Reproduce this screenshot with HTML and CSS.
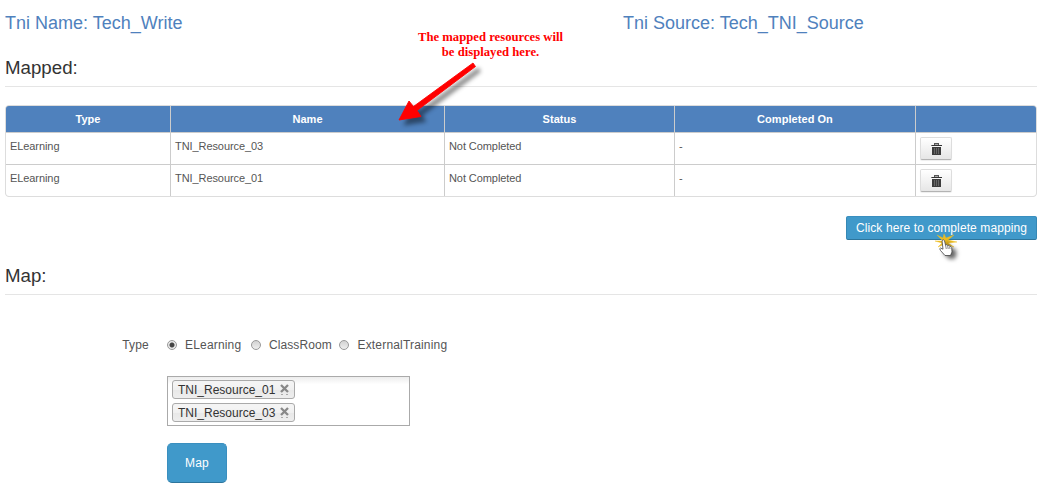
FILE: index.html
```html
<!DOCTYPE html>
<html lang="en">
<head>
<meta charset="utf-8">
<title>Tni Mapping</title>
<link rel="stylesheet" href="styles.css">
</head>
<body>
<svg class="defs" width="0" height="0" aria-hidden="true">
  <symbol id="trash" viewBox="0 0 12 14">
    <path fill="#555" d="M4 1h5v2H4z"/>
    <path fill="#aaa" d="M5 2h3v1H5z"/>
    <path fill="#333" d="M2 3h10v1H2z"/>
    <path fill="#777" d="M1 3h1v1H1z"/>
    <path fill="#3c3c3c" d="M2 5h9v8H2z"/>
    <path fill="#666" d="M4 6h1v6H4zM6 6h1v6H6zM8 6h1v6H8z"/>
  </symbol>
  <symbol id="cross" viewBox="0 0 9 11">
    <path stroke="#888" stroke-width="2.3" d="M1 1l7 7M8 1L1 8"/>
    <path fill="#aaa" d="M1 10h2v1H1zM6 10h2v1H6z"/>
  </symbol>
</svg>
<main class="page">
  <header class="titles">
    <h4 class="title title-name">Tni Name: Tech_Write</h4>
    <h4 class="title title-source">Tni Source: Tech_TNI_Source</h4>
  </header>
  <h4 class="section">Mapped:</h4>
  <div class="table">
    <div class="th">Type</div><div class="th">Name</div><div class="th">Status</div><div class="th">Completed On</div><div class="th"></div>
    <div class="td">ELearning</div><div class="td">TNI_Resource_03</div><div class="td">Not Completed</div><div class="td">-</div><div class="td td-action"><button class="delete"><svg class="trash"><use href="#trash"/></svg></button></div>
    <div class="td">ELearning</div><div class="td">TNI_Resource_01</div><div class="td">Not Completed</div><div class="td">-</div><div class="td td-action"><button class="delete"><svg class="trash"><use href="#trash"/></svg></button></div>
  </div>
  <div class="actions"><button class="complete">Click here to complete mapping</button></div>
  <h4 class="section section-map">Map:</h4>
  <form class="form">
    <span class="label">Type</span>
    <div class="radios">
      <span class="radio radio-on"></span><span class="option option-first">ELearning</span>
      <span class="radio"></span><span class="option option-second">ClassRoom</span>
      <span class="radio"></span><span class="option">ExternalTraining</span>
    </div>
    <div class="chosen">
      <span class="chip">TNI_Resource_01<svg class="cross"><use href="#cross"/></svg></span>
      <span class="chip">TNI_Resource_03<svg class="cross"><use href="#cross"/></svg></span>
    </div>
    <button type="button" class="map">Map</button>
  </form>
  <p class="note">The mapped resources will<br>be displayed here.</p>
  <svg class="arrow" viewBox="0 0 100 75">
    <path d="M78 8L80.500 11.500L22 55.500L26 61.500L4 65L14 46L18.500 51.500z"/>
  </svg>
  <svg class="pointer" viewBox="0 0 40 40">
    <path class="spark" d="M13 16L7 10L13 13L14 9L16 13L24 10L18 15L27 17L18 18L24 22L15 19L8 22L12 18L5 16L12 16z"/>
    <path class="hand" d="M12 15.500q1.500-1.500 2.500.2l1 4.300q1.500-.8 2 .5q1.500-.5 2 .8q1.800-.3 2.200 1.200l.3 4.500l-1.500 3.500h-5.500l-4.500-5q-1.500-2.500 0-2.500l2.500 1.200z"/>
    <path class="lines" d="M15.500 20l.8 4M17.700 21l.5 3M19.700 22l.3 2"/>
  </svg>
</main>
</body>
</html>
```
FILE: styles.css
```css
* { box-sizing: border-box; }
body { margin: 0; background: #fff; color: #555; font: 12px/20px "Liberation Sans", Arial, sans-serif; }
button { font-family: inherit; margin: 0; padding: 0; }
.defs { position: absolute; }
.page { position: relative; height: 495px; padding: 13px 10px 0 5px; overflow: hidden; }
.titles { display: grid; grid-template-columns: 618px 1fr; height: 45px; }
.title, .section { margin: 0; font-size: 18px; font-weight: 400; line-height: 20px; }
.title { color: #4f81bd; }
.section { height: 29px; border-bottom: 1px solid #e5e5e5; color: #333; font-size: 18.7px; }
.table { display: grid; grid-template-columns: 164px 273px 229px 240px 120px; grid-template-rows: 26px 31px 31px; gap: 1px; margin-top: 18px; border: 1px solid #ddd; border-radius: 4px; background: #ccc; overflow: hidden; }
.th { background: #4f81bd; color: #fff; font-size: 11px; font-weight: 700; line-height: 27px; text-align: center; letter-spacing: .05px; }
.td { padding: 3px 4px; background: #fff; font-size: 11px; line-height: 20px; letter-spacing: -.08px; }
.td-action { padding-top: 4px; }
.delete { display: flex; align-items: center; justify-content: center; width: 32px; height: 23px; border: 1px solid #ddd; border-bottom-color: #b3b3b3; border-radius: 2px; background: linear-gradient(#fff, #e6e6e6); box-shadow: 0 1px 1px rgba(0,0,0,.07); }
.trash { width: 12px; height: 14px; }
.actions { display: flex; justify-content: flex-end; margin-top: 19px; }
.complete { width: 191px; height: 24px; border: 1px solid; border-color: #398fc0 #3688b5 #2d759c; border-radius: 2px; background: #4099ca; color: #fff; font-size: 12px; letter-spacing: .1px; }
.section-map { margin-top: 26px; }
.form { display: grid; grid-template-columns: 144px 1fr; column-gap: 18px; margin-top: 40px; }
.label { text-align: right; letter-spacing: .2px; }
.radios { display: flex; align-items: center; height: 20px; }
.radio { width: 10px; height: 10px; border: 1px solid #999; border-radius: 50%; background: linear-gradient(#d2d2d2, #eee); }
.radio-on { background: radial-gradient(circle, #444 0 2px, #e8e8e8 3px); }
.option { margin: 0 9px 0 8px; letter-spacing: .18px; }
.option-first { margin-right: 9.7px; }
.option-second { margin-right: 7.700px; letter-spacing: .08px; }
.chosen { grid-column: 2; display: flex; flex-direction: column; align-items: flex-start; gap: 4px; width: 243px; height: 50px; margin-top: 21px; padding: 3px 4px; border: 1px solid #aaa; background: linear-gradient(#eee 1%, #fff 15%); }
.chip { display: flex; align-items: center; justify-content: space-between; width: 123px; height: 19px; padding: 0 5px; border: 1px solid #aaa; border-radius: 3px; background: linear-gradient(#f4f4f4 20%, #f0f0f0 50%, #e8e8e8 52%, #eee); color: #333; }
.cross { width: 9px; height: 11px; }
.map { grid-column: 2; width: 60px; height: 40px; margin-top: 17px; border: 1px solid #3a8fbf; border-bottom-color: #2d759c; border-radius: 5px; background: #4099ca; color: #fff; font-size: 12px; letter-spacing: .2px; }
.note { position: absolute; left: 385px; top: 30px; width: 200px; margin: 0; padding-left: 11px; color: #f00; font: 700 12.7px/15px "Liberation Serif", "Times New Roman", serif; text-align: center; }
.arrow { position: absolute; left: 395px; top: 55px; width: 100px; height: 75px; fill: #f00; stroke: #f00; stroke-width: .9; filter: drop-shadow(5px 5px 2px rgba(0,0,0,.45)); }
.pointer { position: absolute; left: 930px; top: 225px; width: 40px; height: 40px; }
.spark { fill: #edbd22; stroke: #edbd22; stroke-width: .4; }
.hand { fill: #fff; stroke: #444; stroke-width: .8; filter: drop-shadow(4px 3px 2px rgba(0,0,0,.6)); }
.lines { fill: none; stroke: #555; stroke-width: .7; }
```
